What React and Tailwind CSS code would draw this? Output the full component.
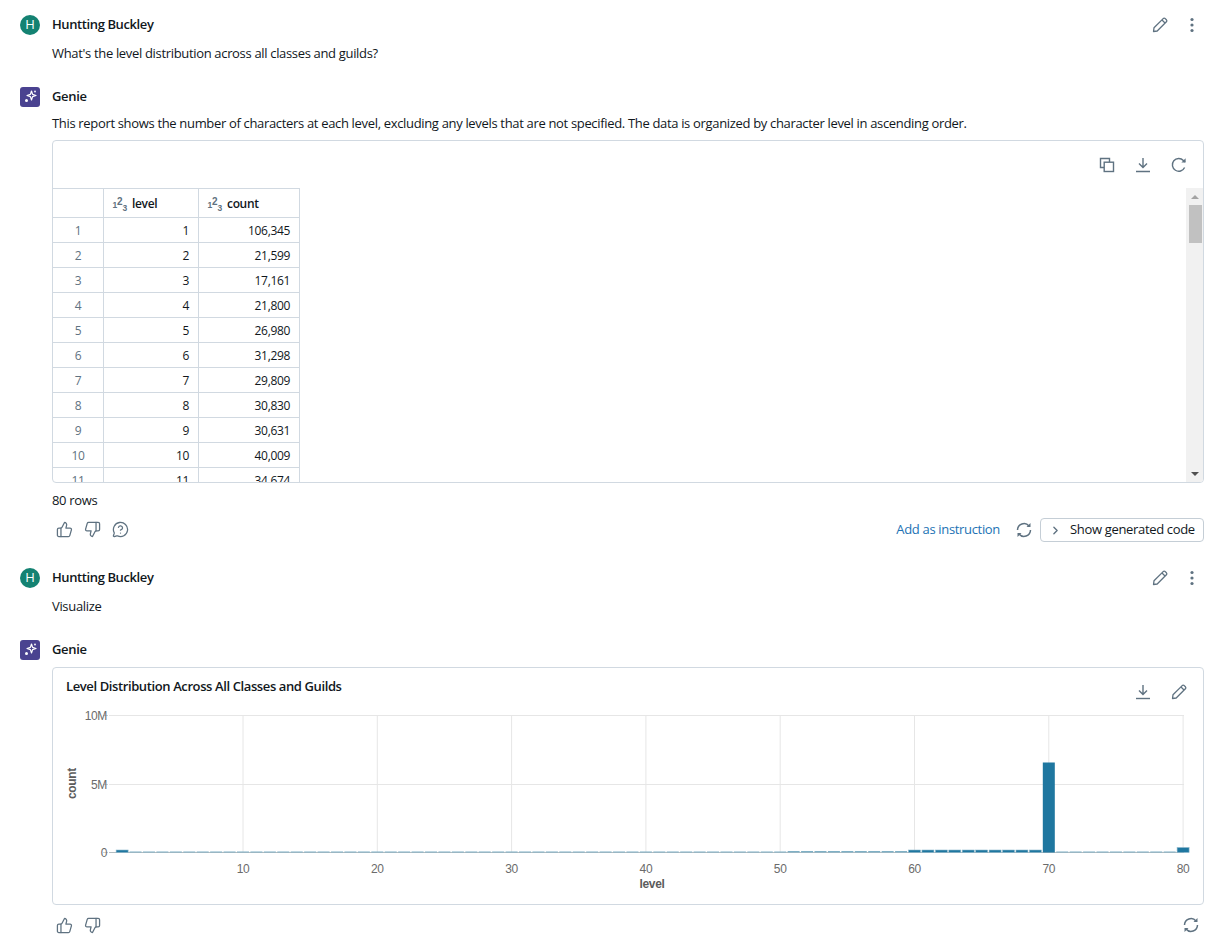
import { ThumbsUp, ThumbsDown, MessageCircleQuestion, ChevronRight } from 'lucide-react';

const ROWS = [
  ['1', '106,345'], ['2', '21,599'], ['3', '17,161'], ['4', '21,800'], ['5', '26,980'], ['6', '31,298'],
  ['7', '29,809'], ['8', '30,830'], ['9', '30,631'], ['10', '40,009'], ['11', '34,674'],
];

// px height of each level's bar in the chart
const barHeight = (level) => {
  if (level === 70) return 90;
  if (level === 80) return 5;
  if (level === 1) return 2.5;
  if (level >= 60 && level < 70) return 2.5;
  if (level > 50 && level < 60) return 1.5;
  return 1;
};

function PencilIcon({ className }) {
  return (
    <svg viewBox="0 0 16 16" className={className} fill="none" stroke="currentColor" strokeWidth="1.3" strokeLinejoin="round">
      <path d="M1.5 14.5 L2 10.8 L11.2 1.6 Q12.2 0.8 13.2 1.6 L14.4 2.8 Q15.2 3.8 14.4 4.8 L5.2 14 Z" />
      <path d="M10 3 L13 6" />
    </svg>
  );
}

function DotsIcon({ className }) {
  return (
    <svg viewBox="0 0 16 16" className={className} fill="currentColor">
      <circle cx="8" cy="2.5" r="1.6" />
      <circle cx="8" cy="8" r="1.6" />
      <circle cx="8" cy="13.5" r="1.6" />
    </svg>
  );
}

function CopyIcon({ className }) {
  return (
    <svg viewBox="0 0 16 16" className={className} fill="none" stroke="currentColor" strokeWidth="1.4">
      <path d="M5 10.5 H1.5 V1.5 H10.5 V5" />
      <rect x="5.2" y="5.2" width="9.3" height="9.3" />
    </svg>
  );
}

function DownloadIcon({ className }) {
  return (
    <svg viewBox="0 0 16 16" className={className} fill="none" stroke="currentColor" strokeWidth="1.4">
      <path d="M8 1 V10 M4 6.5 L8 10.5 L12 6.5" />
      <path d="M1 14.5 H15" />
    </svg>
  );
}

function ReloadIcon({ className }) {
  return (
    <svg viewBox="0 0 16 16" className={className} fill="none" stroke="currentColor" strokeWidth="1.4">
      <path d="M13.6 10.5 A6.4 6.4 0 1 1 12.4 3.4 L14 5" />
      <path d="M14.6 1.2 L14.6 5.4 L10.4 5.4 Z" fill="currentColor" stroke="none" />
    </svg>
  );
}

function SyncIcon({ className }) {
  return (
    <svg viewBox="0 0 16 16" className={className} fill="none" stroke="currentColor" strokeWidth="1.5">
      <path d="M1.5 8 A6.5 6.5 0 0 1 13 4" />
      <path d="M14.5 8 A6.5 6.5 0 0 1 3 12" />
      <path d="M14.5 1 V5 H10.5 Z" fill="currentColor" stroke="none" />
      <path d="M1.5 15 V11 H5.5 Z" fill="currentColor" stroke="none" />
    </svg>
  );
}

function SparkleIcon({ className }) {
  return (
    <svg viewBox="0 0 20 20" className={className}>
      <path d="M11.5 4 L12.6 7.4 L16 8.5 L12.6 9.6 L11.5 13 L10.4 9.6 L7 8.5 L10.4 7.4 Z" fill="none" stroke="white" strokeWidth="1.2" strokeLinejoin="round" />
      <circle cx="6.5" cy="13.5" r="1.5" fill="white" />
      <circle cx="15" cy="4.5" r="0.9" fill="white" />
    </svg>
  );
}

function NumberTypeIcon() {
  return (
    <svg width="16" height="16" viewBox="0 0 16 16" className="text-[#5f7281] shrink-0 overflow-visible">
      <text x="0.5" y="12" fontSize="8.5" fontWeight="700" fill="currentColor" fontFamily="Liberation Sans, sans-serif">1</text>
      <text x="5" y="9" fontSize="10" fontWeight="700" fill="currentColor" fontFamily="Liberation Sans, sans-serif">2</text>
      <text x="10.5" y="15" fontSize="8.5" fontWeight="700" fill="currentColor" fontFamily="Liberation Sans, sans-serif">3</text>
    </svg>
  );
}

function UserMessage({ text }) {
  return (
    <div className="pl-5 pr-[15px]">
      <div className="flex items-center h-5">
        <div className="w-5 h-5 rounded-full bg-[#148272] text-white text-[13px] tracking-normal flex items-center justify-center">H</div>
        <span className="ml-3 font-semibold text-[#11171c] tracking-[-0.4px]">Huntting Buckley</span>
        <div className="ml-auto flex items-center gap-[16px] text-[#5f7281]">
          <PencilIcon className="w-[16px] h-[16px]" />
          <DotsIcon className="w-[16px] h-[16px] mr-[4px]" />
        </div>
      </div>
      <p className="ml-8 mt-[8px] h-5 leading-5 text-[#11171c]">{text}</p>
    </div>
  );
}

function GenieHeader() {
  return (
    <div className="flex items-center h-5 pl-5">
      <div className="w-5 h-5 rounded-[3px] bg-[#4a4290] flex items-center justify-center">
        <SparkleIcon className="w-5 h-5" />
      </div>
      <span className="ml-3 font-semibold text-[#11171c]">Genie</span>
    </div>
  );
}

function DataTable() {
  return (
    <div className="w-[247px] shrink-0 overflow-hidden">
      <div className="flex h-[30px] border-y border-[#d1d9e1] font-semibold text-[12px] text-[#11171c]">
        <div className="w-[51px] border-r border-[#d1d9e1]" />
        <div className="w-[95px] border-r border-[#d1d9e1] flex items-center gap-[4px] pl-[8px] pt-[1px]"><NumberTypeIcon />level</div>
        <div className="w-[101px] border-r border-[#d1d9e1] flex items-center gap-[4px] pl-[8px] pt-[1px]"><NumberTypeIcon />count</div>
      </div>
      {ROWS.map(([level, count]) => (
        <div key={level} className="flex h-[25px] border-b border-[#d1d9e1] text-[12px] leading-[26px] text-[#11171c]">
          <div className="w-[51px] border-r border-[#d1d9e1] text-center text-[#5f7281]">{level}</div>
          <div className="w-[95px] border-r border-[#d1d9e1] text-right pr-[9px]">{level}</div>
          <div className="w-[101px] border-r border-[#d1d9e1] text-right pr-[9px]">{count}</div>
        </div>
      ))}
    </div>
  );
}

function Scrollbar() {
  return (
    <div className="ml-auto w-[17px] bg-[#f1f1f1] flex flex-col items-center">
      <div className="h-[17px] flex items-center">
        <div className="w-0 h-0 border-x-[4px] border-x-transparent border-b-[4px] border-b-[#a3a3a3]" />
      </div>
      <div className="w-[13px] h-[38px] ml-[1px] bg-[#c1c1c1]" />
      <div className="mt-auto h-[17px] flex items-center">
        <div className="w-0 h-0 border-x-[4px] border-x-transparent border-t-[4px] border-t-[#505050]" />
      </div>
    </div>
  );
}

function LevelChart() {
  const levels = Array.from({ length: 80 }, (_, i) => i + 1);
  const xFor = (level) => 190 + (level - 10) * 13.43;
  const ticks = [10, 20, 30, 40, 50, 60, 70, 80];
  const textFont = 'Liberation Sans, Arial, sans-serif';
  const barColor = (level) => {
    if (level === 1 || (level >= 60 && level <= 70) || level === 80) return '#1f77a0';
    return '#7fb0c5';
  };
  return (
    <svg width="1150" height="190" viewBox="0 0 1150 190" className="block shrink-0 overflow-visible">
      {[0, 69, 137].map((y) => (
        <line key={y} x1="56" x2="1131" y1={y + 0.5} y2={y + 0.5} stroke="#e6e6e6" />
      ))}
      {ticks.map((t) => (
        <line key={t} x1={xFor(t)} x2={xFor(t)} y1="0" y2="137" stroke="#e6e6e6" />
      ))}
      <line x1="56" x2="1131" y1="137.5" y2="137.5" stroke="#b4bcc0" />
      {levels.map((l) => {
        const h = barHeight(l);
        const small = barColor(l) === '#7fb0c5';
        return (
          <rect key={l} x={xFor(l) - 6} y={137.5 - h} width="12" height={h} fill={barColor(l)} stroke={small ? 'none' : '#8fbacd'} strokeWidth={l === 70 ? 0 : 0.6} />
        );
      })}
      {[['10M', 0], ['5M', 69], ['0', 137]].map(([label, y]) => (
        <g key={label}>
          <line x1="50" x2="55" y1={y + 0.5} y2={y + 0.5} stroke="#cfcfcf" />
          <text x="54" y={y + 4.5} textAnchor="end" fontSize="12" fill="#6b6b6b" fontFamily={textFont}>{label}</text>
        </g>
      ))}
      {ticks.map((t) => (
        <text key={t} x={xFor(t)} y="158" textAnchor="middle" fontSize="12" fill="#6b6b6b" fontFamily={textFont}>{t}</text>
      ))}
      <text x="599" y="173" textAnchor="middle" fontSize="12" fontWeight="700" fill="#5c5c5c" fontFamily={textFont}>level</text>
      <text transform="translate(23 68.5) rotate(-90)" textAnchor="middle" fontSize="12" fontWeight="700" fill="#5c5c5c" fontFamily={textFont}>count</text>
    </svg>
  );
}

export default function App() {
  return (
    <div className="h-[939px] bg-white text-[13px] font-['Open_Sans','Noto_Sans',sans-serif] tracking-[-0.33px] overflow-hidden">
      <div className="pt-[15px]">
        <UserMessage text="What's the level distribution across all classes and guilds?" />

        <div className="mt-[24px]">
          <GenieHeader />
          <div className="pl-[52px] pr-[15px]">
            <p className="mt-[6px] h-5 leading-5 text-[#11171c]">
              This report shows the number of characters at each level, excluding any levels that are not specified. The data is organized by character level in ascending order.
            </p>
            <div className="mt-[7px] h-[343px] border border-[#d1d9e1] rounded-[4px] overflow-hidden flex flex-col">
              <div className="h-[47px] shrink-0 flex items-center justify-end gap-[20px] pr-[16px] pt-[1px] text-[#5f7281]">
                <CopyIcon className="w-[16px] h-[16px]" />
                <DownloadIcon className="w-[16px] h-[16px]" />
                <ReloadIcon className="w-[16px] h-[16px]" />
              </div>
              <div className="flex flex-1 min-h-0">
                <DataTable />
                <Scrollbar />
              </div>
            </div>
            <p className="mt-[7px] h-5 leading-5 text-[#11171c]">80 rows</p>
            <div className="mt-[8px] h-6 flex items-center text-[#5f7281]">
              <ThumbsUp className="ml-[4px] w-[17px] h-[17px] mb-[1px]" strokeWidth={1.8} />
              <ThumbsDown className="ml-[11px] w-[17px] h-[17px] mb-[1px]" strokeWidth={1.8} />
              <MessageCircleQuestion className="ml-[11px] w-[17px] h-[17px] mb-[1px]" strokeWidth={1.8} />
              <span className="ml-auto text-[#2272b4]">Add as instruction</span>
              <SyncIcon className="ml-[16px] w-[16px] h-[16px]" />
              <div className="ml-[8px] h-6 w-[164px] border border-[#c5ced6] rounded-[4px] flex items-center pl-[8px] text-[#11171c] shrink-0">
                <ChevronRight className="w-[13px] h-[13px] text-[#5f7281]" strokeWidth={2.5} />
                <span className="ml-[8px]">Show generated code</span>
              </div>
            </div>
          </div>
        </div>

        <div className="mt-[26px]">
          <UserMessage text="Visualize" />
        </div>

        <div className="mt-[24px]">
          <GenieHeader />
          <div className="pl-[52px] pr-[15px]">
            <div className="mt-[7px] h-[238px] border border-[#d1d9e1] rounded-[4px] flex flex-col">
              <div className="flex items-center h-[47px] shrink-0 pl-[13px] pr-[16px]">
                <span className="font-semibold text-[#11171c] tracking-[-0.39px] pb-[10px]">Level Distribution Across All Classes and Guilds</span>
                <div className="ml-auto flex items-center gap-[20px] text-[#5f7281]">
                  <DownloadIcon className="w-[16px] h-[16px]" />
                  <PencilIcon className="w-[16px] h-[16px]" />
                </div>
              </div>
              <LevelChart />
            </div>
            <div className="mt-[10px] h-5 flex items-center text-[#5f7281]">
              <ThumbsUp className="ml-[4px] w-[17px] h-[17px]" strokeWidth={1.8} />
              <ThumbsDown className="ml-[11px] w-[17px] h-[17px]" strokeWidth={1.8} />
              <SyncIcon className="ml-auto w-[16px] h-[16px] mr-[5px]" />
            </div>
          </div>
        </div>
      </div>
    </div>
  );
}
